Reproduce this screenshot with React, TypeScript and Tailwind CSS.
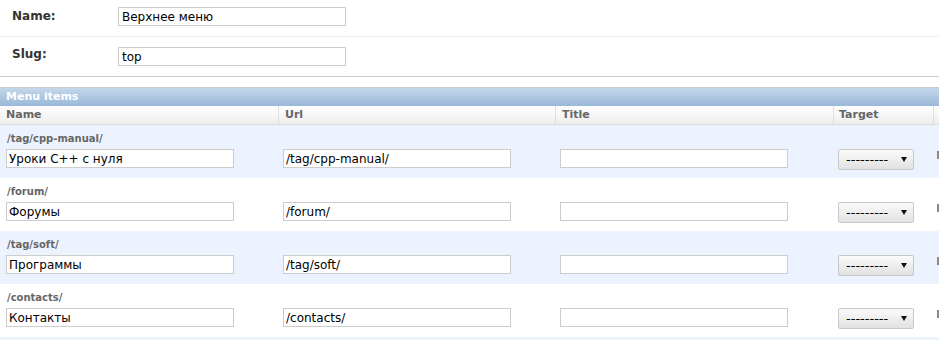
import React from "react";

const items = [
  { path: "/tag/cpp-manual/", name: "Уроки С++ с нуля", url: "/tag/cpp-manual/" },
  { path: "/forum/", name: "Форумы", url: "/forum/" },
  { path: "/tag/soft/", name: "Программы", url: "/tag/soft/" },
  { path: "/contacts/", name: "Контакты", url: "/contacts/" },
];

function TextInput({ value, className = "" }: { value: string; className?: string }) {
  return (
    <input
      readOnly
      value={value}
      className={`h-[19px] w-[228px] border border-[#ccc] bg-white px-[2px] text-[12px] text-black outline-none ${className}`}
    />
  );
}

function TargetSelect() {
  return (
    <div className="relative mt-[4px] ml-[5px] h-[21px] w-[76px] rounded-[2px] border border-[#c8c8c8] bg-linear-to-b from-[#fbfbfb] to-[#e1e1e1]">
      <span className="absolute left-[7px] top-[2px] text-[13px] leading-[15px] text-black">---------</span>
      <svg className="absolute left-[62px] top-[7px]" width="6" height="5" viewBox="0 0 6 5">
        <path d="M0 0H6L3 5Z" fill="#111" />
      </svg>
    </div>
  );
}

export default function App() {
  return (
    <div className="h-[340px] w-[939px] overflow-hidden bg-white font-['DejaVu_Sans',sans-serif]">
      {/* Menu fields */}
      <div className="flex h-[37px] border-b border-[#eee]">
        <label className="ml-[12px] mt-[9px] w-[106px] text-[12px] font-bold leading-[14px] text-[#333]">Name:</label>
        <TextInput value="Верхнее меню" className="mt-[7px] px-[3px]" />
      </div>
      <div className="flex h-[40px] border-b border-[#ccc]">
        <label className="ml-[12px] mt-[10px] w-[106px] text-[12px] font-bold leading-[14px] text-[#333]">Slug:</label>
        <TextInput value="top" className="mt-[10px] px-[3px]" />
      </div>

      {/* Inline group */}
      <div className="mt-[10px] w-[980px] border-t border-[#ccc]">
        <div className="flex h-[18px] items-center bg-linear-to-b from-[#c4d7eb] to-[#99b8d8] pl-[6px] text-[11px] font-bold text-white">
          Menu items
        </div>
        <div className="flex h-[19px] border-b border-[#ddd] bg-linear-to-b from-white to-[#eeeeee] text-[11px] font-bold leading-[18px] text-[#666]">
          <div className="w-[278px] pl-[6px]">Name</div>
          <div className="w-[277px] border-l border-[#ddd] pl-[6px]">Url</div>
          <div className="w-[278px] border-l border-[#ddd] pl-[6px]">Title</div>
          <div className="w-[100px] border-l border-[#ddd] pl-[5px]">Target</div>
          <div className="flex-1 border-l border-[#ddd]" />
        </div>

        {items.map((item, i) => (
          <div key={item.path} className={`h-[53px] ${i % 2 === 0 ? "bg-[#edf3fe]" : "bg-white"}`}>
            <div className="pl-[7px] pt-[8px] text-[10px] font-bold leading-[12px] text-[#666]">{item.path}</div>
            <div className="flex">
              <div className="w-[278px]">
                <TextInput value={item.name} className="ml-[6px] mt-[4px]" />
              </div>
              <div className="w-[277px]">
                <TextInput value={item.url} className="ml-[5px] mt-[4px]" />
              </div>
              <div className="w-[278px]">
                <TextInput value="" className="ml-[5px] mt-[4px]" />
              </div>
              <div className="w-[100px]">
                <TargetSelect />
              </div>
              <div className="flex-1">
                {/* delete checkbox, cut off by the window edge */}
                <div className="ml-[4px] mt-[6px] h-[8px] w-[12px] border-l-2 border-t border-[#8a8a8a] bg-[#f4f4f4]" />
              </div>
            </div>
          </div>
        ))}
        <div className="h-[10px] bg-[#edf3fe]" />
      </div>
    </div>
  );
}
